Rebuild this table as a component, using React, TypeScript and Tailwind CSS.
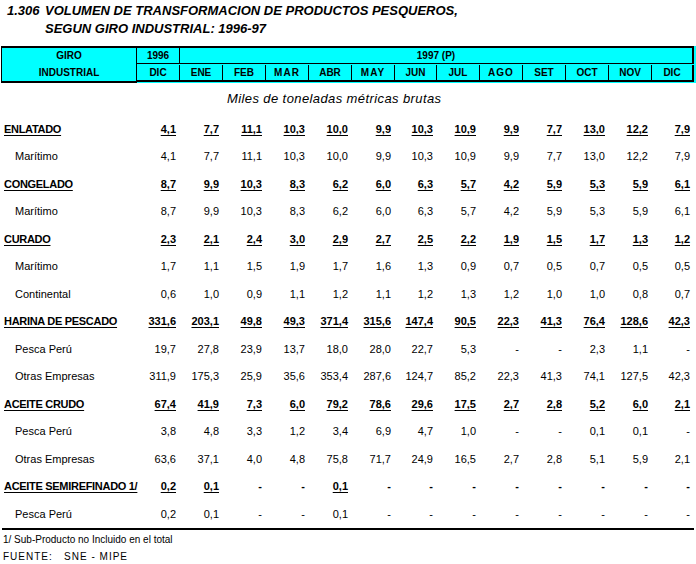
import React from 'react';

const GRID =
  'grid grid-cols-[136px_43px_43px_43px_43px_43px_43px_42px_43px_43px_43px_43px_43px_42px]';

const MONTHS = ['DIC', 'ENE', 'FEB', 'MAR', 'ABR', 'MAY', 'JUN', 'JUL', 'AGO', 'SET', 'OCT', 'NOV', 'DIC'];

type Row = { label: string; main?: boolean; values: string[] };

const rows: Row[] = [
  { label: 'ENLATADO', main: true, values: ['4,1', '7,7', '11,1', '10,3', '10,0', '9,9', '10,3', '10,9', '9,9', '7,7', '13,0', '12,2', '7,9'] },
  { label: 'Marítimo', values: ['4,1', '7,7', '11,1', '10,3', '10,0', '9,9', '10,3', '10,9', '9,9', '7,7', '13,0', '12,2', '7,9'] },
  { label: 'CONGELADO', main: true, values: ['8,7', '9,9', '10,3', '8,3', '6,2', '6,0', '6,3', '5,7', '4,2', '5,9', '5,3', '5,9', '6,1'] },
  { label: 'Marítimo', values: ['8,7', '9,9', '10,3', '8,3', '6,2', '6,0', '6,3', '5,7', '4,2', '5,9', '5,3', '5,9', '6,1'] },
  { label: 'CURADO', main: true, values: ['2,3', '2,1', '2,4', '3,0', '2,9', '2,7', '2,5', '2,2', '1,9', '1,5', '1,7', '1,3', '1,2'] },
  { label: 'Marítimo', values: ['1,7', '1,1', '1,5', '1,9', '1,7', '1,6', '1,3', '0,9', '0,7', '0,5', '0,7', '0,5', '0,5'] },
  { label: 'Continental', values: ['0,6', '1,0', '0,9', '1,1', '1,2', '1,1', '1,2', '1,3', '1,2', '1,0', '1,0', '0,8', '0,7'] },
  { label: 'HARINA DE PESCADO', main: true, values: ['331,6', '203,1', '49,8', '49,3', '371,4', '315,6', '147,4', '90,5', '22,3', '41,3', '76,4', '128,6', '42,3'] },
  { label: 'Pesca Perú', values: ['19,7', '27,8', '23,9', '13,7', '18,0', '28,0', '22,7', '5,3', '-', '-', '2,3', '1,1', '-'] },
  { label: 'Otras Empresas', values: ['311,9', '175,3', '25,9', '35,6', '353,4', '287,6', '124,7', '85,2', '22,3', '41,3', '74,1', '127,5', '42,3'] },
  { label: 'ACEITE CRUDO', main: true, values: ['67,4', '41,9', '7,3', '6,0', '79,2', '78,6', '29,6', '17,5', '2,7', '2,8', '5,2', '6,0', '2,1'] },
  { label: 'Pesca Perú', values: ['3,8', '4,8', '3,3', '1,2', '3,4', '6,9', '4,7', '1,0', '-', '-', '0,1', '0,1', '-'] },
  { label: 'Otras Empresas', values: ['63,6', '37,1', '4,0', '4,8', '75,8', '71,7', '24,9', '16,5', '2,7', '2,8', '5,1', '5,9', '2,1'] },
  { label: 'ACEITE SEMIREFINADO 1/', main: true, values: ['0,2', '0,1', '-', '-', '0,1', '-', '-', '-', '-', '-', '-', '-', '-'] },
  { label: 'Pesca Perú', values: ['0,2', '0,1', '-', '-', '0,1', '-', '-', '-', '-', '-', '-', '-', '-'] },
];

const App = () => {
  return (
    <div className="w-[696px] h-[564px] bg-white text-black overflow-hidden font-['Liberation_Sans',Arial,sans-serif]">
      {/* Title */}
      <div className="flex pt-[2px] pl-[7px] text-[13px] leading-[18px] font-bold italic">
        <span className="w-[38px]">1.306</span>
        <div>
          <div>VOLUMEN DE TRANSFORMACION DE PRODUCTOS PESQUEROS,</div>
          <div>SEGUN GIRO INDUSTRIAL: 1996-97</div>
        </div>
      </div>

      {/* Header */}
      <div className={`${GRID} ml-px mt-[8px] bg-[#00ffff] text-[10px] font-bold leading-none`}>
        <div className="row-span-2 border-l border-r border-t-2 border-b-2 border-black flex flex-col items-center">
          <div className="h-[16px] flex items-center">GIRO</div>
          <div className="h-[17px] flex items-center">INDUSTRIAL</div>
        </div>
        <div className="h-[18px] border-r border-t-2 border-b border-black flex items-center justify-center">1996</div>
        <div className="col-span-12 h-[18px] border-r-2 border-t-2 border-b border-black flex items-center justify-center">
          1997 (P)
        </div>
        {MONTHS.map((m, i) => (
          <div
            key={i}
            className={`h-[17px] border-b-2 border-black flex items-center justify-center ${
              i === 12 ? 'border-r-2' : 'border-r'
            } ${m === 'MAY' || m === 'MAR' || m === 'AGO' ? 'tracking-[1px]' : ''}`}
          >
            {m}
          </div>
        ))}
      </div>

      {/* Unit */}
      <div className="h-[32px] flex items-center pl-[227px] text-[13px] italic tracking-[0.4px]">
        Miles de toneladas métricas brutas
      </div>

      {/* Body */}
      <div className="ml-px text-[11px]">
        {rows.map((r, ri) => (
          <div key={ri} className={`${GRID} h-[27.5px] items-center`}>
            <div
              className={
                r.main
                  ? 'pl-[3px] font-bold underline underline-offset-2 whitespace-nowrap tracking-[-0.3px]'
                  : 'pl-[14px] whitespace-nowrap'
              }
            >
              {r.label}
            </div>
            {r.values.map((v, vi) => (
              <div
                key={vi}
                className={`text-right pr-[4px] ${r.main ? 'font-bold' : ''} ${
                  r.main && v !== '-' ? 'underline underline-offset-2' : ''
                }`}
              >
                {v}
              </div>
            ))}
          </div>
        ))}
      </div>

      {/* Footer */}
      <div className="ml-[2px] w-[692px] border-t-2 border-black" />
      <div className="pl-[3px] pt-[3px] text-[10px] leading-[14px]">1/ Sub-Producto no Incluido en el total</div>
      <div className="pl-[3px] pt-[3px] text-[10px] leading-[14px] tracking-[1px]">FUENTE:&nbsp;&nbsp;&nbsp;SNE - MIPE</div>
    </div>
  );
};

export default App;
